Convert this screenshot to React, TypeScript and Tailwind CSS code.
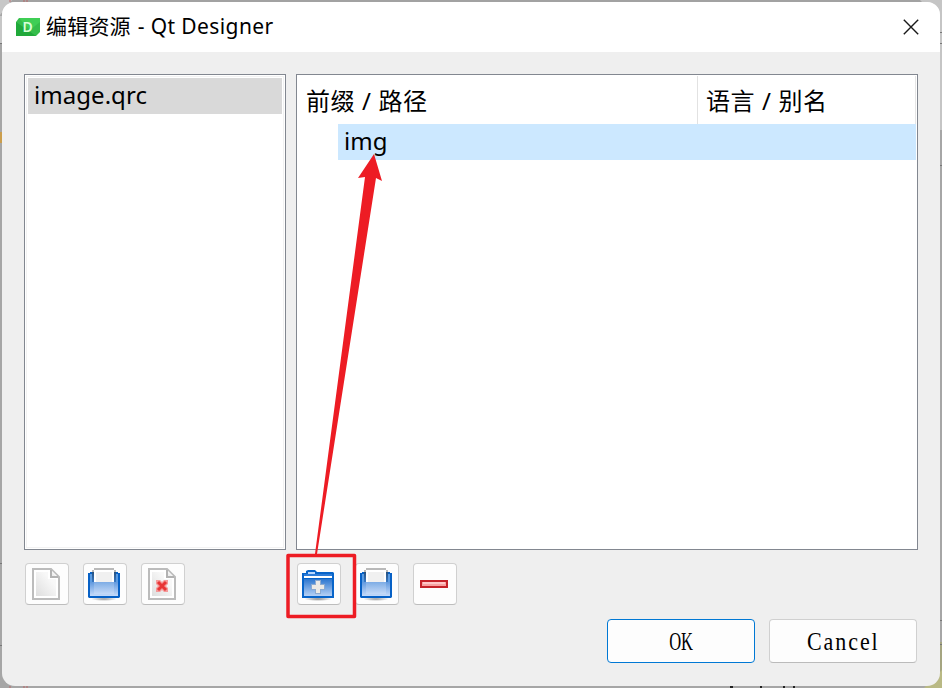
import type { ReactNode } from 'react';

const uiFont = "font-['Noto_Sans','Noto_Sans_CJK_SC',sans-serif]";

function ToolButton({ children, label }: { children: ReactNode; label: string }) {
  return (
    <button
      aria-label={label}
      className="flex h-[42px] w-11 items-start justify-center rounded-[4px] border border-[#d0d0d0] border-b-[#bdbdbd] bg-[#fdfdfd] pt-1"
    >
      {children}
    </button>
  );
}

function PageIcon({ remove = false }: { remove?: boolean }) {
  return (
    <svg width="32" height="34" viewBox="0 0 32 34" className="-ml-1.5">
      <defs>
        <linearGradient id="paper" x1="1" y1="0" x2="0" y2="1">
          <stop offset="0.3" stopColor="#f8f8f8" />
          <stop offset="1" stopColor="#dedede" />
        </linearGradient>
        <linearGradient id="pageShade">
          <stop offset="0" stopColor="#bbb" />
          <stop offset="0.5" stopColor="#777" />
          <stop offset="1" stopColor="#bbb" />
        </linearGradient>
      </defs>
      <path d="M5 1H23L31 9V31H5Z" fill="#fff" stroke="#bcbcbc" strokeWidth="2" />
      <path d="M8 4H20V11H28V28H8Z" fill="url(#paper)" />
      <path d="M23 2V9H30" fill="#fff" stroke="#b2b2b2" strokeWidth="2" />
      <path d="M24 8V4L28 8Z" fill="#eee" />
      <path d="M6 31H30" stroke="url(#pageShade)" strokeWidth="2" />
      {remove && (
        <>
          <path d="M12 12h4l2 2 2-2h4v4l-2 2 2 2v4h-4l-2-2-2 2h-4v-4l2-2-2-2Z" fill="#f59a9a" />
          <path d="M14 14L22 22M22 14L14 22" stroke="#e83535" strokeWidth="3" />
        </>
      )}
    </svg>
  );
}

function TrayIcon() {
  return (
    <svg width="34" height="34" viewBox="0 0 34 34" className="-ml-0.5">
      <defs>
        <linearGradient id="tray" x1="0" y1="0" x2="0" y2="1">
          <stop offset="0" stopColor="#6099df" />
          <stop offset="1" stopColor="#c6dbfa" />
        </linearGradient>
        <linearGradient id="trayEdge" x1="0" y1="0" x2="0" y2="1">
          <stop offset="0" stopColor="#24496f" />
          <stop offset="1" stopColor="#3979c4" />
        </linearGradient>
        <radialGradient id="trayShadow">
          <stop offset="0" stopColor="#999" />
          <stop offset="1" stopColor="#fdfdfd" />
        </radialGradient>
      </defs>
      <ellipse cx="17" cy="31" rx="13" ry="2" fill="url(#trayShadow)" />
      <path d="M1 5H3V4H5V2H29V4H31V5H33V29L32 30H2L1 29Z" fill="#0761c6" />
      <path d="M3 6h2v8H3ZM29 6h2v8H29Z" fill="#5b9ce3" />
      <path d="M5 2h2v12H5ZM27 2h2v12H27Z" fill="url(#trayEdge)" />
      <path d="M7 0H27V2H29V4H5V2H7Z" fill="#b9b9b9" />
      <path d="M7 2H27V14H7Z" fill="#fff" />
      <path d="M9 4H25V14H9Z" fill="#f0f0f0" />
      <path d="M3 14H31V28H3Z" fill="url(#tray)" />
      <path d="M7 14H27V26H7Z" fill="#fff" opacity="0.19" />
    </svg>
  );
}

function FolderIcon() {
  return (
    <svg width="34" height="34" viewBox="0 0 34 34" className="-ml-0.5">
      <defs>
        <linearGradient id="folder" x1="0" y1="0" x2="0" y2="1">
          <stop offset="0" stopColor="#2c76cf" />
          <stop offset="1" stopColor="#b6d1f5" />
        </linearGradient>
        <radialGradient id="folderShadow">
          <stop offset="0" stopColor="#888" />
          <stop offset="1" stopColor="#fdfdfd" />
        </radialGradient>
      </defs>
      <ellipse cx="17" cy="31" rx="14" ry="2" fill="url(#folderShadow)" />
      <path d="M1 5H5V3L7 2H14L16 4H32L33 5V30H1Z" fill="#0764c9" />
      <path d="M7 4H14V6H7Z" fill="#b9d8ff" />
      <path d="M3 6H31V8H3Z" fill="#2d7cd8" />
      <path d="M3 8H31V10H3Z" fill="#fff" />
      <path d="M3 11H31V28H3Z" fill="url(#folder)" />
      <path d="M14 12H20V16H24V22H20V26H14V22H10V16H14Z" fill="#8caad0" />
      <path d="M15 13H19V17H23V21H19V25H15V21H11V17H15Z" fill="#eceae6" />
    </svg>
  );
}

function MinusIcon() {
  return (
    <svg width="28" height="8" viewBox="0 0 28 8" className="mt-3 -ml-0.5">
      <path d="M1 1H27V7H1Z" fill="#f7a2a2" stroke="#c52229" strokeWidth="2" />
      <path d="M3 3H25" stroke="#ffc7c7" strokeWidth="2" />
    </svg>
  );
}

export default function App() {
  return (
    <div className={`relative h-[688px] w-[942px] overflow-hidden bg-[#a6a6a6] p-0.5 text-black ${uiFont}`}>
      <svg className="absolute inset-0" width="942" height="688" aria-hidden="true">
        <path d="M0 0H942V2H0Z" fill="#a2a2a2" />
        <path d="M920 0H942V130H940V20Z" fill="#c5c5c5" />
        <path d="M0 0H12L0 15ZM0 16H2V43H0Z" fill="#c7c7c7" />
        <path d="M662 686H942V642H940V686Z" fill="#a5a581" />
        <path d="M924 688L942 670V688Z" fill="#b9b984" />
        <path d="M10 0V2M24 0V2M27 0V2M10 686V688M24 686V688M27 686V688" stroke="#b96969" />
        <path d="M0 43.500H2M0 563.500H2M0 645.500H2M940 32.500H942M940 43.500H942M940 165.500H942M940 620.500H942M940 644.500H942" stroke="#777" />
        <path d="M0 132H2V143H0Z" fill="#cb9e4d" />
        <path d="M730 686h3v2h-3ZM760 686h2v2h-2ZM783 686h2v2h-2ZM793 686h2v2h-2Z" fill="#222" />
      </svg>
      <main className="relative flex h-[684px] w-[938px] flex-col overflow-hidden rounded-[13px] bg-[#efefef]">
        <header className="flex h-[50px] shrink-0 items-center bg-white pr-[21px] pl-[14px]">
          <svg width="24" height="18" viewBox="0 0 24 18">
            <path d="M3 0H24V14L20 18H0V4Z" fill="#35bd4b" />
            <path d="M0 4L20 18H0Z" fill="#20a93a" />
            <path d="M3 0H24V4L14 12Z" fill="#3fce55" />
            <text x="6.500" y="14" fill="#d8ffda" className="font-['Noto_Sans',sans-serif] text-[14px] font-semibold">D</text>
          </svg>
          <h1 className="-mt-0.5 ml-[6px] flex text-[21px] leading-[28px] font-normal whitespace-pre">
            <span className="tracking-[0.2px]">编辑资源</span>
            <span className="ml-px tracking-[0.4px]"> - Qt Designer</span>
          </h1>
          <button aria-label="关闭" className="-mt-px ml-auto">
            <svg width="16" height="16" viewBox="0 0 16 16" fill="none" stroke="#191919" strokeWidth="1.400">
              <path d="M.8.8L15.200 15.200M15.200.8L.8 15.200" />
            </svg>
          </button>
        </header>
        <section className="mt-[22px] flex h-[476px] shrink-0 gap-[10px] pl-[22px]">
          <div className="w-[262px] border border-[#828790] bg-white p-px">
            <div className="h-full border border-[#f2f2f2] p-px">
              <div className="flex h-9 items-center bg-[#d9d9d9] pl-[6px] text-[24px]">
                <span className="-translate-y-px tracking-[0.05px]">image.qrc</span>
              </div>
            </div>
          </div>
          <div className="w-[622px] border border-[#828790] bg-white px-px">
            <div className="flex h-[49px] pt-px text-[24px] leading-[49px] tracking-[0.6px]">
              <div className="w-[400px] border-r border-[#e2e2e2] pl-[8px]">前缀 / 路径</div>
              <div className="flex-1 border-r border-[#e5e5e5] pl-[8px]">语言 / 别名</div>
            </div>
            <div className="ml-10 flex h-9 items-center bg-[#cce8ff] pl-[6px] text-[24px]">
              <span className="-translate-y-px">img</span>
            </div>
          </div>
        </section>
        <div className="mt-[13px] flex h-[42px] shrink-0 pl-[23px]">
          <div className="flex w-[272px] gap-[14px]">
            <ToolButton label="新建"><PageIcon /></ToolButton>
            <ToolButton label="打开"><TrayIcon /></ToolButton>
            <ToolButton label="移除"><PageIcon remove /></ToolButton>
          </div>
          <div className="flex gap-[14px]">
            <ToolButton label="添加前缀"><FolderIcon /></ToolButton>
            <ToolButton label="添加文件"><TrayIcon /></ToolButton>
            <ToolButton label="删除"><MinusIcon /></ToolButton>
          </div>
        </div>
        <footer className="mt-[14px] flex justify-end gap-[14px] pr-[23px] font-['Liberation_Serif',serif] text-[25px]">
          <button className="h-11 w-[148px] rounded-[4px] border border-[#0078d4] bg-[#fdfdfd]">
            <span className="inline-block translate-y-px scale-x-[0.66]">OK</span>
          </button>
          <button className="h-11 w-[148px] rounded-[4px] border border-[#d0d0d0] border-b-[#bbb] bg-[#fdfdfd]">
            <span className="inline-block translate-y-px scale-x-[0.88] tracking-[2.200px]">Cancel</span>
          </button>
        </footer>
      </main>
      <svg className="pointer-events-none absolute inset-0" width="942" height="688" aria-hidden="true">
        <rect x="288" y="555.500" width="66.500" height="61" fill="none" stroke="#ed1c24" strokeWidth="3.500" strokeLinejoin="round" />
        <path d="M315 554L365 177L358 178L374 154L382 181L376 178L317 554Z" fill="#ed1c24" />
      </svg>
    </div>
  );
}
